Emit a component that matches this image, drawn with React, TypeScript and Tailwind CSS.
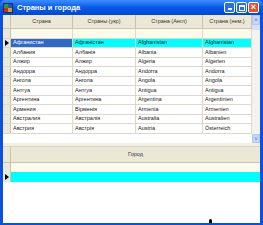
import React from 'react';

// Countries table data: [ru, ukr, eng, ger]
const COUNTRIES: string[][] = [
  ['Афганистан', 'Афганістан', 'Afghanistan', 'Afghanistan'],
  ['Албания', 'Албанія', 'Albania', 'Albanien'],
  ['Алжир', 'Алжир', 'Algeria', 'Algerien'],
  ['Андорра', 'Андорра', 'Andorra', 'Andorra'],
  ['Ангола', 'Ангола', 'Angola', 'Angola'],
  ['Антгуа', 'Антгуа', 'Antigua', 'Antigua'],
  ['Аргентина', 'Аргентина', 'Argentina', 'Argentinien'],
  ['Армения', 'Вірменія', 'Armenia', 'Armenien'],
  ['Австралия', 'Австралія', 'Australia', 'Australien'],
  ['Австрия', 'Австрія', 'Austria', 'Österreich'],
];

const HEADERS = ['Страна', 'Страны (укр)', 'Страна (Англ)', 'Страна (нем.)'];
const COL_W = ['w-[62px]', 'w-[63px]', 'w-[67px]', 'w-[49px]'];

const Arrow = () => (
  <svg width="4" height="6" viewBox="0 0 4 6" className="block">
    <path d="M0 0 L4 3 L0 6 Z" fill="#000" />
  </svg>
);

const TitleBar: React.FC = () => (
  <div className="h-[15px] flex items-center rounded-t-[5px] bg-gradient-to-b from-[#3d8dff] via-[#0659e6] to-[#0348d2] pl-[3px] pr-[4px]">
    {/* app icon */}
    <div className="w-[10px] h-[10px] grid grid-cols-2 border border-[#1c2a60]">
      <div className="bg-[#2a9a3a]" />
      <div className="bg-[#3050c0]" />
      <div className="bg-[#c03028]" />
      <div className="bg-[#d0a030]" />
    </div>
    <span className="ml-[4px] text-[7.5px] font-bold text-white leading-none">Страны и города</span>
    <div className="ml-auto flex gap-[1px]">
      <div className="w-[11px] h-[11px] rounded-[2px] border border-white bg-[#2b6df0] flex items-end justify-center pb-[2px]">
        <div className="w-[4px] h-[2px] bg-white" />
      </div>
      <div className="w-[11px] h-[11px] rounded-[2px] border border-white bg-[#2b6df0] flex items-center justify-center">
        <div className="w-[6px] h-[6px] border border-white border-t-2" />
      </div>
      <div className="w-[11px] h-[11px] rounded-[2px] border border-white bg-[#e0552c] flex items-center justify-center text-white text-[9px] font-bold leading-none">
        ×
      </div>
    </div>
  </div>
);

const App: React.FC = () => {
  return (
    <div
      className="relative w-[263px] h-[225px] flex flex-col bg-[#0c50dc] overflow-hidden"
      style={{ fontFamily: '"Liberation Sans", Arial, sans-serif' }}
    >
      <TitleBar />

      <div className="flex-1 flex flex-col mx-[3px] mb-[2px] bg-[#ece9d8]">
        {/* Countries grid */}
        <div className="h-[128px] flex bg-white">
          <div className="flex-1 flex flex-col">
            <div className="h-[14px] flex bg-[#ebe8d7] border-b border-[#c7c3b0]">
              <div className="w-[8px] border-r border-[#c7c3b0]" />
              {HEADERS.map((h, i) => (
                <div
                  key={h}
                  className={`${COL_W[i]} border-r border-[#c7c3b0] flex items-center justify-center text-[5.5px] text-[#333]`}
                >
                  {h}
                </div>
              ))}
            </div>
            <div className="h-[10px] flex bg-[#fcfaea] border-b border-[#dcd9cc]">
              <div className="w-[8px] bg-[#ece9d8] border-r border-[#c7c3b0]" />
              {COL_W.map((w, i) => (
                <div key={i} className={`${w} border-r border-[#dcd9cc]`} />
              ))}
            </div>
            {COUNTRIES.map((row, r) => (
              <div
                key={row[0]}
                className={`${r % 2 ? 'h-[10px]' : 'h-[9px]'} flex border-b border-[#dcd9cc] ${r === 0 ? 'bg-[#00ffff]' : 'bg-white'}`}
              >
                <div className="w-[8px] bg-[#ece9d8] border-r border-[#c7c3b0] flex items-center justify-center">
                  {r === 0 && <Arrow />}
                </div>
                {row.map((c, i) => (
                  <div
                    key={i}
                    className={`${COL_W[i]} border-r border-[#dcd9cc] flex items-center px-[2px] text-[5.5px] leading-none whitespace-nowrap overflow-hidden ${
                      r === 0 && i === 0 ? 'bg-[#316ac5] text-white' : 'text-[#222]'
                    }`}
                  >
                    {c}
                  </div>
                ))}
              </div>
            ))}
          </div>
          {/* vertical scrollbar */}
          <div className="w-[8px] flex flex-col bg-[#f3f2ec]">
            <div className="h-[10px] bg-[#c6d6fb] border border-[#b2c6f5] flex items-center justify-center text-[#4d6185] text-[6px] leading-none">
              ˄
            </div>
            <div className="h-[5px] bg-[#d4e0fc]" />
            <div className="flex-1" />
            <div className="h-[9px] bg-[#c6d6fb] border border-[#b2c6f5] flex items-center justify-center text-[#4d6185] text-[6px] leading-none">
              ˅
            </div>
          </div>
        </div>

        {/* splitter */}
        <div className="h-[4px] bg-[#f1efe4] border-b border-[#d8d4c4]" />

        {/* Cities grid */}
        <div className="flex-1 flex flex-col bg-white">
          <div className="h-[16px] flex bg-[#ebe8d7] border-b border-[#c7c3b0]">
            <div className="w-[8px] border-r border-[#c7c3b0]" />
            <div className="flex-1 flex items-center justify-center text-[5.5px] text-[#333]">Город</div>
          </div>
          <div className="h-[9px] flex bg-[#fcfaea]">
            <div className="w-[8px] bg-[#ece9d8] border-r border-[#c7c3b0]" />
          </div>
          <div className="h-[10px] flex bg-[#00ffff]">
            <div className="w-[8px] bg-[#ece9d8] border-r border-[#c7c3b0] flex items-center justify-center">
              <Arrow />
            </div>
          </div>
        </div>
      </div>

      {/* mouse cursor */}
      <div className="absolute left-[209px] top-[219px] w-[3px] h-[4px] bg-black rounded-t-full" />
    </div>
  );
};

export default App;
